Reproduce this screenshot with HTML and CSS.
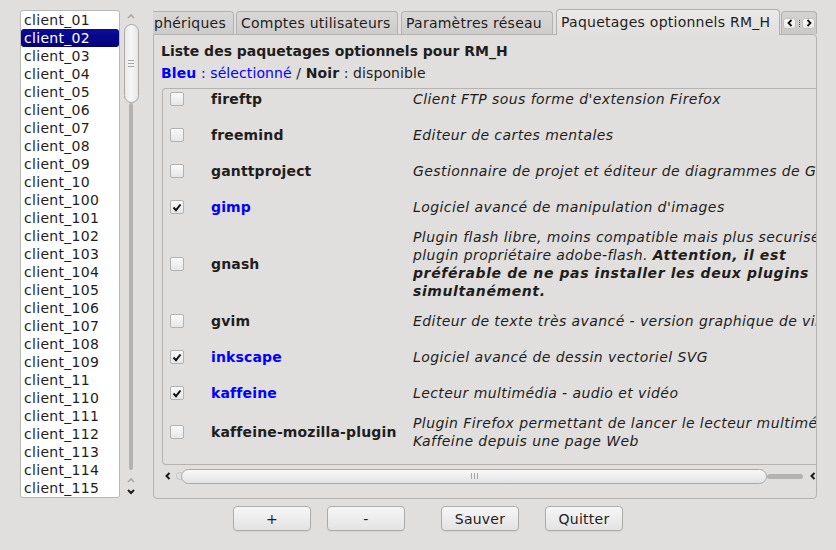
FILE: index.html
```html
<!DOCTYPE html>
<html lang="fr">
<head>
<meta charset="utf-8">
<title>Paquetages optionnels</title>
<link rel="stylesheet" href="styles.css">
</head>
<body>
<div class="app">
  <div class="top">
    <div class="list">
      <div class="item">client_01</div>
      <div class="item sel">client_02</div>
      <div class="item">client_03</div>
      <div class="item">client_04</div>
      <div class="item">client_05</div>
      <div class="item">client_06</div>
      <div class="item">client_07</div>
      <div class="item">client_08</div>
      <div class="item">client_09</div>
      <div class="item">client_10</div>
      <div class="item">client_100</div>
      <div class="item">client_101</div>
      <div class="item">client_102</div>
      <div class="item">client_103</div>
      <div class="item">client_104</div>
      <div class="item">client_105</div>
      <div class="item">client_106</div>
      <div class="item">client_107</div>
      <div class="item">client_108</div>
      <div class="item">client_109</div>
      <div class="item">client_11</div>
      <div class="item">client_110</div>
      <div class="item">client_111</div>
      <div class="item">client_112</div>
      <div class="item">client_113</div>
      <div class="item">client_114</div>
      <div class="item">client_115</div>
    </div>

    <div class="vscroll">
      <div class="sb-arrow"><svg width="8" height="6" viewBox="0 0 8 6"><polyline points="1,5 4,2 7,5" fill="none" stroke="#a9a8a7" stroke-width="1.6"/></svg></div>
      <div class="vhandle"><span class="vgrip"></span><span class="vgrip"></span><span class="vgrip"></span></div>
      <div class="vtrack"></div>
      <div class="sb-arrow"><svg width="8" height="6" viewBox="0 0 8 6"><polyline points="1,5 4,2 7,5" fill="none" stroke="#a9a8a7" stroke-width="1.6"/></svg></div>
      <div class="sb-arrow"><svg width="8" height="6" viewBox="0 0 8 6"><polyline points="1,1 4,4 7,1" fill="none" stroke="#1b1b1b" stroke-width="2"/></svg></div>
    </div>

    <div class="tabwidget">
      <div class="tabbar">
        <div class="tab t1">phériques</div>
        <div class="tab t2">Comptes utilisateurs</div>
        <div class="tab t3">Paramètres réseau</div>
        <div class="tab active t4">Paquetages optionnels RM_H</div>
        <div class="tabscroll">
          <span class="tsbtn"><svg width="6" height="8" viewBox="0 0 6 8"><polyline points="4.5,1 1.5,4 4.5,7" fill="none" stroke="#111" stroke-width="1.8"/></svg></span>
          <span class="tsdots"></span>
          <span class="tsbtn"><svg width="6" height="8" viewBox="0 0 6 8"><polyline points="1.5,1 4.5,4 1.5,7" fill="none" stroke="#111" stroke-width="1.8"/></svg></span>
        </div>
      </div>
      <div class="panel">
        <div class="title">Liste des paquetages optionnels pour RM_H</div>
        <div class="legend"><span class="blue"><b>Bleu</b> : sélectionné</span> / <b>Noir</b> : disponible</div>
        <div class="tableview">
          <div class="rows">
            <div class="row"><div class="ck"><span class="box"></span></div><div class="name">fireftp</div><div class="desc">Client FTP sous forme d'extension Firefox</div></div>
            <div class="row"><div class="ck"><span class="box"></span></div><div class="name">freemind</div><div class="desc">Editeur de cartes mentales</div></div>
            <div class="row"><div class="ck"><span class="box"></span></div><div class="name">ganttproject</div><div class="desc">Gestionnaire de projet et éditeur de diagrammes de Gantt</div></div>
            <div class="row"><div class="ck"><span class="box"><svg width="10" height="9" viewBox="0 0 10 9"><polyline points="1.5,4.5 4,7.2 8.5,1.5" fill="none" stroke="#111" stroke-width="2"/></svg></span></div><div class="name blue">gimp</div><div class="desc">Logiciel avancé de manipulation d'images</div></div>
            <div class="row"><div class="ck"><span class="box"></span></div><div class="name">gnash</div><div class="desc">Plugin flash libre, moins compatible mais plus securisé que le<br>plugin propriétaire adobe-flash. <b>Attention, il est</b><br><b>préférable de ne pas installer les deux plugins</b><br><b>simultanément.</b></div></div>
            <div class="row"><div class="ck"><span class="box"></span></div><div class="name">gvim</div><div class="desc">Editeur de texte très avancé - version graphique de vim</div></div>
            <div class="row"><div class="ck"><span class="box"><svg width="10" height="9" viewBox="0 0 10 9"><polyline points="1.5,4.5 4,7.2 8.5,1.5" fill="none" stroke="#111" stroke-width="2"/></svg></span></div><div class="name blue">inkscape</div><div class="desc">Logiciel avancé de dessin vectoriel SVG</div></div>
            <div class="row"><div class="ck"><span class="box"><svg width="10" height="9" viewBox="0 0 10 9"><polyline points="1.5,4.5 4,7.2 8.5,1.5" fill="none" stroke="#111" stroke-width="2"/></svg></span></div><div class="name blue">kaffeine</div><div class="desc">Lecteur multimédia - audio et vidéo</div></div>
            <div class="row"><div class="ck"><span class="box"></span></div><div class="name">kaffeine-mozilla-plugin</div><div class="desc">Plugin Firefox permettant de lancer le lecteur multimédia<br>Kaffeine depuis une page Web</div></div>
            <div class="row"><div class="ck"><span class="box"></span></div><div class="name"></div><div class="desc"></div></div>
          </div>
        </div>
        <div class="hscroll">
          <svg class="harrow" width="6" height="8" viewBox="0 0 6 8"><polyline points="4.5,1 1.5,4 4.5,7" fill="none" stroke="#1b1b1b" stroke-width="2"/></svg>
          <span class="hcap"></span>
          <div class="hhandle"><span class="hgrip"></span><span class="hgrip"></span><span class="hgrip"></span></div>
          <div class="htrack"></div>
          <svg class="harrow2" width="6" height="8" viewBox="0 0 6 8"><polyline points="4.5,1 1.5,4 4.5,7" fill="none" stroke="#1b1b1b" stroke-width="2"/></svg>
        </div>
      </div>
    </div>
  </div>

  <div class="buttons">
    <button class="btn b1">+</button>
    <button class="btn b2">-</button>
    <button class="btn b3">Sauver</button>
    <button class="btn b4">Quitter</button>
  </div>
</div>
</body>
</html>
```

FILE: styles.css
```css
* { box-sizing: border-box; }

html, body {
  margin: 0;
  padding: 0;
}

body {
  width: 836px;
  height: 550px;
  overflow: hidden;
  background: #e0dfde;
  font-family: "DejaVu Sans", "Liberation Sans", sans-serif;
  font-size: 14px;
  letter-spacing: 0.25px;
  color: #1f1d1c;
}

.app {
  display: flex;
  flex-direction: column;
}

.top {
  display: flex;
  padding: 9px 0 0 20px;
  height: 500px;
}

/* ---- client list ---- */
.list {
  width: 100px;
  height: 488px;
  margin-top: 1px;
  background: #ffffff;
  border: 1px solid #b9b8b7;
  border-radius: 3px;
  overflow: hidden;
}

.item {
  height: 18px;
  line-height: 18px;
  padding-left: 3px;
  white-space: nowrap;
  letter-spacing: 0.3px;
  color: #1f1d1c;
}

.item.sel {
  background: linear-gradient(#0d0d98, #00007a);
  color: #ffffff;
  border-radius: 3px;
}

/* ---- vertical scrollbar ---- */
.vscroll {
  width: 16px;
  height: 488px;
  margin-top: 1px;
  margin-left: 3px;
  display: flex;
  flex-direction: column;
  align-items: center;
}

.sb-arrow {
  height: 12px;
  width: 16px;
  display: flex;
  align-items: center;
  justify-content: center;
  flex: none;
}

.vhandle {
  flex: none;
  width: 15px;
  height: 79px;
  margin-top: 2px;
  border: 1px solid #a9a8a7;
  border-radius: 8px;
  background: linear-gradient(90deg, #e9e9e9, #f7f7f7 45%, #e6e6e6);
  display: flex;
  flex-direction: column;
  align-items: center;
  justify-content: center;
  gap: 2px;
}

.vgrip {
  display: block;
  width: 6px;
  height: 1px;
  background: #a6a5a4;
}

.vtrack {
  flex: 1;
  width: 4px;
  margin-bottom: 4px;
  background: #b3b2b1;
  border-radius: 2px;
}

/* ---- tab widget ---- */
.tabwidget {
  width: 664px;
  margin-left: 14px;
  display: flex;
  flex-direction: column;
}

.tabbar {
  height: 25px;
  display: flex;
  align-items: flex-end;
}

.tab {
  height: 23px;
  border: 1px solid #b3b2b1;
  border-bottom: none;
  border-radius: 4px 4px 0 0;
  background: linear-gradient(#d9d8d7, #cdcccb);
  display: flex;
  align-items: center;
  padding-left: 4px;
  white-space: nowrap;
  overflow: hidden;
  color: #1f1d1c;
}

.t1 { width: 81px; padding-left: 1px; border-left: none; border-top-left-radius: 0; }
.t2 { width: 162px; margin-left: 2px; }
.t3 { width: 152px; margin-left: 3px; }
.t4 { width: 224px; margin-left: 3px; }

.tab.active {
  height: 26px;
  margin-bottom: -1px;
  position: relative;
  z-index: 1;
  background: linear-gradient(#ebeae9, #e0dfde);
  border-color: #b0afae;
  padding-bottom: 1px;
}

.tabscroll {
  width: 36px;
  height: 23px;
  margin-left: 1px;
  border: 1px solid #b3b2b1;
  border-bottom: none;
  border-radius: 4px 4px 0 0;
  background: linear-gradient(#d4d3d2, #cac9c8);
  display: flex;
  align-items: center;
  padding-left: 1px;
  gap: 1px;
}

.tsbtn {
  width: 13px;
  height: 11px;
  border-radius: 3px;
  background: linear-gradient(#fbfbfb, #e9e9e9);
  border: 1px solid #c2c1c0;
  display: flex;
  align-items: center;
  justify-content: center;
}

.tsdots {
  width: 2px;
  height: 7px;
  border-left: 1px dotted #555;
  margin-left: 2px;
}

.panel {
  height: 465px;
  border: 1px solid #b4b3b2;
  border-radius: 0 4px 4px 4px;
  padding: 7px 0 0 7px;
  overflow: hidden;
  display: flex;
  flex-direction: column;
}

.title {
  height: 18px;
  line-height: 18px;
  font-weight: bold;
  letter-spacing: 0;
  white-space: nowrap;
}

.legend {
  height: 18px;
  line-height: 18px;
  margin-top: 4px;
  letter-spacing: 0.1px;
  white-space: nowrap;
}

.blue { color: #0000ff; }

.tableview {
  flex: none;
  width: 720px;
  height: 377px;
  margin-top: 6px;
  margin-left: 1px;
  border: 1px solid #b4b3b2;
  border-right: none;
  border-radius: 4px 0 0 4px;
  overflow: hidden;
}

.rows {
  margin-top: -8px;
}

.row {
  display: flex;
  align-items: center;
  min-height: 36px;
  padding: 3px 0;
}

.ck {
  width: 48px;
  padding-left: 7px;
  display: flex;
  align-items: center;
  flex: none;
}

.box {
  width: 14px;
  height: 14px;
  border: 1px solid #b3b2b1;
  border-radius: 2px;
  background: linear-gradient(#fafafa, #e6e6e6);
  display: flex;
  align-items: center;
  justify-content: center;
}

.name {
  width: 202px;
  flex: none;
  font-weight: bold;
  letter-spacing: 0.15px;
  line-height: 18px;
  white-space: nowrap;
}

.desc {
  font-style: italic;
  line-height: 18px;
  letter-spacing: 0.42px;
  white-space: nowrap;
  color: #1f1d1c;
}

.desc b {
  letter-spacing: 0.6px;
}

/* ---- horizontal scrollbar ---- */
.hscroll {
  height: 16px;
  margin-top: 3px;
  display: flex;
  align-items: center;
  width: 680px;
}

.harrow { margin-left: 4px; flex: none; }

.hcap {
  width: 6px;
  height: 8px;
  margin-left: 5px;
  border: 1px solid #c9c8c7;
  border-right: none;
  border-radius: 4px 0 0 4px;
  flex: none;
}

.hhandle {
  flex: none;
  width: 586px;
  height: 15px;
  margin-left: -1px;
  border: 1px solid #a9a8a7;
  border-radius: 8px;
  background: linear-gradient(#f7f7f7, #ebebeb 60%, #e2e2e2);
  display: flex;
  align-items: center;
  justify-content: center;
  gap: 2px;
}

.hgrip {
  display: block;
  width: 1px;
  height: 6px;
  background: #a6a5a4;
}

.htrack {
  flex: none;
  width: 36px;
  height: 5px;
  background: #b3b2b1;
  border-radius: 3px;
}

.harrow2 { margin-left: 7px; flex: none; }

/* ---- bottom buttons ---- */
.buttons {
  display: flex;
  margin-top: 6px;
  height: 24px;
}

.btn {
  width: 78px;
  height: 25px;
  border: 1px solid #adacab;
  border-radius: 4px;
  background: linear-gradient(#f6f6f6, #e3e3e3);
  font-family: "DejaVu Sans", "Liberation Sans", sans-serif;
  font-size: 14px;
  letter-spacing: 0.25px;
  color: #1f1d1c;
  padding: 0;
  box-shadow: 0 1px 1px rgba(0, 0, 0, 0.06);
}

.b1 { margin-left: 233px; }
.b2 { margin-left: 16px; }
.b3 { margin-left: 36px; }
.b4 { margin-left: 26px; }
```
